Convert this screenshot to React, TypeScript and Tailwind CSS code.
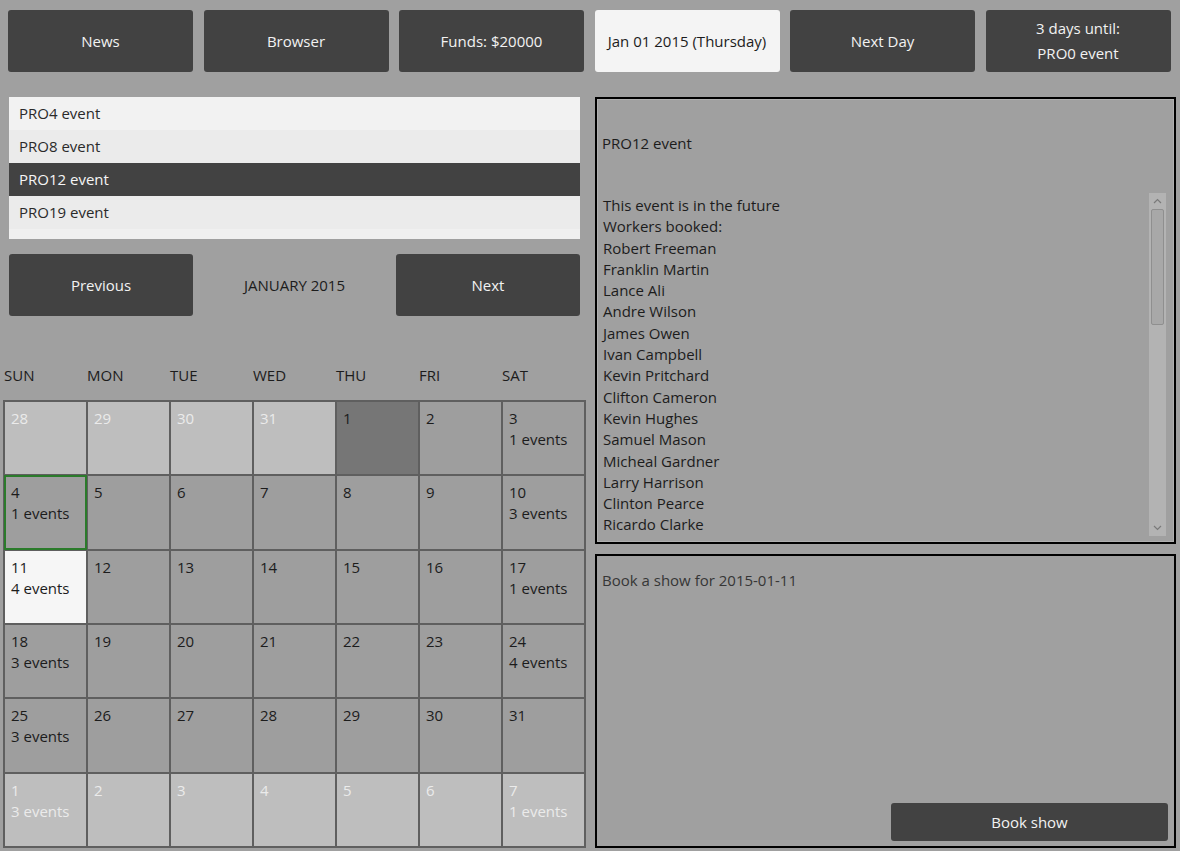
import React from 'react';

type Cell = {
  day: number;
  events?: number;
  kind?: 'other' | 'today' | 'selected' | 'focus';
};

const topButtons = ['News', 'Browser', 'Funds: $20000', 'Jan 01 2015 (Thursday)', 'Next Day'];

const events = ['PRO4 event', 'PRO8 event', 'PRO12 event', 'PRO19 event'];

const weekDays = ['SUN', 'MON', 'TUE', 'WED', 'THU', 'FRI', 'SAT'];

const workers = [
  'Robert Freeman',
  'Franklin Martin',
  'Lance Ali',
  'Andre Wilson',
  'James Owen',
  'Ivan Campbell',
  'Kevin Pritchard',
  'Clifton Cameron',
  'Kevin Hughes',
  'Samuel Mason',
  'Micheal Gardner',
  'Larry Harrison',
  'Clinton Pearce',
  'Ricardo Clarke',
];

// 6 weeks shown, jan 2015 starts on thursday
const cells: Cell[] = [
  { day: 28, kind: 'other' },
  { day: 29, kind: 'other' },
  { day: 30, kind: 'other' },
  { day: 31, kind: 'other' },
  { day: 1, kind: 'today' },
  { day: 2 },
  { day: 3, events: 1 },
  { day: 4, events: 1, kind: 'focus' },
  { day: 5 },
  { day: 6 },
  { day: 7 },
  { day: 8 },
  { day: 9 },
  { day: 10, events: 3 },
  { day: 11, events: 4, kind: 'selected' },
  { day: 12 },
  { day: 13 },
  { day: 14 },
  { day: 15 },
  { day: 16 },
  { day: 17, events: 1 },
  { day: 18, events: 3 },
  { day: 19 },
  { day: 20 },
  { day: 21 },
  { day: 22 },
  { day: 23 },
  { day: 24, events: 4 },
  { day: 25, events: 3 },
  { day: 26 },
  { day: 27 },
  { day: 28 },
  { day: 29 },
  { day: 30 },
  { day: 31 },
  { day: 1, events: 3, kind: 'other' },
  { day: 2, kind: 'other' },
  { day: 3, kind: 'other' },
  { day: 4, kind: 'other' },
  { day: 5, kind: 'other' },
  { day: 6, kind: 'other' },
  { day: 7, events: 1, kind: 'other' },
];

function DarkButton({ children, className = '' }: { children: React.ReactNode; className?: string }) {
  return (
    <button
      className={`flex items-center justify-center rounded-[3px] bg-[#424242] text-[15px] leading-[25px] text-[#f2f2f2] ${className}`}
    >
      {children}
    </button>
  );
}

function DayCell({ cell }: { cell: Cell }) {
  let tone = 'bg-[#9e9e9e] text-[#1c1c1c]';
  if (cell.kind === 'other') tone = 'bg-[#bebebe] text-[#ebebeb]';
  if (cell.kind === 'today') tone = 'bg-[#767676] text-[#1c1c1c]';
  if (cell.kind === 'selected') tone = 'bg-[#f6f6f6] text-[#1c1c1c]';
  const focus = cell.kind === 'focus' ? 'outline-2 outline-[#2b7b2b] -outline-offset-1' : '';

  return (
    <div className={`pl-[6px] pt-[6px] text-[15px] leading-[21px] ${tone} ${focus}`}>
      <div>{cell.day}</div>
      {cell.events ? <div>{cell.events} events</div> : null}
    </div>
  );
}

function ScrollBar() {
  return (
    <div className="mr-[7px] flex w-[17px] shrink-0 flex-col bg-[#b3b3b3]">
      <div className="flex h-[16px] items-center justify-center">
        <svg width="9" height="6" viewBox="0 0 9 6">
          <path d="M1 5 L4.5 1.5 L8 5" fill="none" stroke="#7a7a7a" strokeWidth="1.2" />
        </svg>
      </div>
      <div className="mx-[2px] h-[116px] rounded-[2px] border border-[#8f8f8f] bg-[#a8a8a8]" />
      <div className="flex-1" />
      <div className="flex h-[16px] items-center justify-center">
        <svg width="9" height="6" viewBox="0 0 9 6">
          <path d="M1 1 L4.5 4.5 L8 1" fill="none" stroke="#7a7a7a" strokeWidth="1.2" />
        </svg>
      </div>
    </div>
  );
}

export default function App() {
  return (
    <div
      className="h-[851px] w-[1180px] overflow-hidden bg-[#a0a0a0] text-[#1c1c1c]"
      style={{ fontFamily: '"Open Sans", "Noto Sans", sans-serif' }}
    >
      {/* top bar */}
      <div className="flex gap-[10.5px] pl-[8px] pt-[10px]">
        {topButtons.map((label) =>
          label.startsWith('Jan') ? (
            <button
              key={label}
              className="flex h-[62px] w-[185px] items-center justify-center rounded-[3px] bg-[#f4f4f4] text-[15px] text-[#1c1c1c]"
            >
              {label}
            </button>
          ) : (
            <DarkButton key={label} className="h-[62px] w-[185px]">
              {label}
            </DarkButton>
          ),
        )}
        <DarkButton className="h-[62px] w-[185px] flex-col">
          <span>3 days until:</span>
          <span>PRO0 event</span>
        </DarkButton>
      </div>

      <div className="mt-[25px] flex">
        {/* left column */}
        <div className="w-[586px] shrink-0">
          <div className="ml-[9px] h-[142px] w-[571px] bg-[#f0f0f0]">
            {events.map((ev, i) => (
              <div
                key={ev}
                className={`flex h-[33px] items-center pl-[10px] text-[15px] ${
                  i === 2
                    ? 'bg-[#424242] text-[#f5f5f5]'
                    : i % 2 === 0
                      ? 'bg-[#f2f2f2] text-[#2a2a2a]'
                      : 'bg-[#ebebeb] text-[#2a2a2a]'
                }`}
              >
                {ev}
              </div>
            ))}
          </div>

          <div className="ml-[9px] mt-[15px] flex h-[62px] w-[571px] items-center">
            <DarkButton className="h-[62px] w-[184px]">Previous</DarkButton>
            <div className="flex-1 text-center text-[15px] text-[#1c1c1c]">JANUARY 2015</div>
            <DarkButton className="h-[62px] w-[184px]">Next</DarkButton>
          </div>

          <div className="ml-[4px] mt-[48px] grid h-[22px] grid-cols-[repeat(7,83px)] text-[15px] leading-[22px]">
            {weekDays.map((d) => (
              <div key={d}>{d}</div>
            ))}
          </div>

          <div className="ml-[3px] mt-[14px] grid h-[448px] w-[583px] grid-cols-7 grid-rows-6 gap-[2px] bg-[#5f5f5f] p-[2px]">
            {cells.map((c, i) => (
              <DayCell key={i} cell={c} />
            ))}
          </div>
        </div>

        {/* right column */}
        <div className="ml-[9px] flex w-[581px] flex-col gap-[10px]">
          <div className="flex h-[447px] flex-col border-2 border-black">
            <div className="flex flex-1 flex-col border border-[#b0b0b0]">
              <div className="pl-[4px] pt-[33px] text-[15px] leading-[21px]">PRO12 event</div>
              <div className="mt-[39px] flex h-[343px]">
                <div className="flex-1 overflow-hidden pl-[5px] pt-[2px] text-[15px] leading-[21.3px]">
                  <div>This event is in the future</div>
                  <div>Workers booked:</div>
                  {workers.map((w) => (
                    <div key={w}>{w}</div>
                  ))}
                </div>
                <ScrollBar />
              </div>
            </div>
          </div>

          <div className="flex h-[294px] flex-col border-2 border-black">
            <div className="pl-[5px] pt-[14px] text-[15px] leading-[21px] text-[#363636]">
              Book a show for 2015-01-11
            </div>
            <div className="flex-1" />
            <div className="mb-[5px] mr-[6px] flex justify-end">
              <DarkButton className="h-[38px] w-[277px]">Book show</DarkButton>
            </div>
          </div>
        </div>
      </div>
    </div>
  );
}
